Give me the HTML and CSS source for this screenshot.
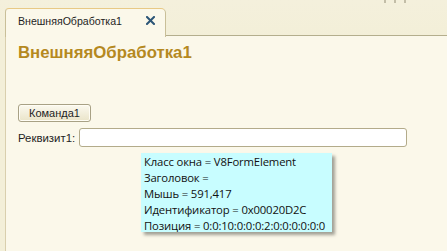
FILE: index.html
```html
<!DOCTYPE html>
<html>
<head>
<meta charset="utf-8">
<link rel="stylesheet" href="styles.css">
</head>
<body>
<div class="window">
  <div class="tabbar">
    <div class="tab">
      <span class="tab-title">ВнешняяОбработка1</span>
      <svg class="close" width="9" height="9" viewBox="0 0 9 9"><path d="M1 1 L8 8 M8 1 L1 8" stroke="#2c5677" stroke-width="2" stroke-linecap="square"/></svg>
    </div>
    <div class="tab-rest">
      <div class="dots"><i></i><i></i><i></i></div>
    </div>
  </div>
  <div class="content">
    <h1 class="title">ВнешняяОбработка1</h1>
    <button class="btn">Команда1</button>
    <div class="field">
      <label class="label">Реквизит1:</label>
      <div class="input"></div>
    </div>
    <div class="tooltip">
      <div>Класс окна = V8FormElement</div>
      <div>Заголовок =</div>
      <div>Мышь = 591,417</div>
      <div>Идентификатор = 0x00020D2C</div>
      <div>Позиция = 0:0:10:0:0:0:2:0:0:0:0:0:0</div>
    </div>
  </div>
</div>
</body>
</html>
```
FILE: styles.css
```css
html, body {
  margin: 0;
  padding: 0;
  width: 447px;
  height: 251px;
  overflow: hidden;
  background: #f3efd8;
}
.window {
  display: flex;
  flex-direction: column;
  height: 251px;
  font-family: "Liberation Sans", Arial, sans-serif;
  font-size: 11px;
  color: #1a1a1a;
}
.tabbar {
  display: flex;
  align-items: flex-end;
  height: 36px;
  padding-left: 5px;
  background: linear-gradient(#f4f0dc, #f3efd8);
}
.tab {
  position: relative;
  z-index: 1;
  width: 161px;
  height: 29px;
  margin-bottom: -1px;
  box-sizing: border-box;
  border: 1px solid #c9bf98;
  border-top-color: #e8c985;
  border-bottom: none;
  border-radius: 4px 5px 0 0;
  background: #fbf8ea;
  display: flex;
  align-items: center;
  padding: 0 0 5px 12px;
}
.tab-title {
  flex: 1;
  color: #1e1e1e;
  font-size: 10.6px;
}
.close {
  margin-right: 10px;
}
.tab-rest {
  flex: 1;
  align-self: stretch;
  border-bottom: 1px solid #b4ae8d;
  position: relative;
}
.dots {
  position: absolute;
  left: 218px;
  top: 0;
  display: flex;
  gap: 8px;
}
.dots i {
  display: block;
  width: 2px;
  height: 3px;
  background: #c3bea8;
}
.content {
  position: relative;
  flex: 1;
  margin-left: 5px;
  border-left: 1px solid #d9cfad;
  background: #fbf8ea;
  padding: 0 0 0 12px;
  display: flex;
  flex-direction: column;
  align-items: flex-start;
}
.title {
  margin: 7px 0 0 0;
  font-size: 16.8px;
  font-weight: bold;
  color: #b5891f;
  line-height: 20px;
}
.btn {
  margin-top: 41px;
  width: 73px;
  height: 18px;
  padding: 0;
  box-sizing: border-box;
  border: 1px solid #a8a185;
  border-radius: 3px;
  background: linear-gradient(#fbf9ef, #eae4c9);
  box-shadow: inset 0 0 0 1px #fffdf4;
  font-family: "Liberation Sans", Arial, sans-serif;
  font-size: 11px;
  color: #1e1e1e;
  line-height: 16px;
}
.field {
  display: flex;
  align-items: center;
  margin-top: 6px;
  gap: 1px;
}
.label {
  width: 60px;
  color: #1e1e1e;
  font-size: 11.4px;
}
.input {
  width: 328px;
  height: 19px;
  box-sizing: border-box;
  border: 1px solid #b3ab8a;
  border-radius: 3px;
  background: #ffffff;
}
.tooltip {
  position: absolute;
  left: 135px;
  top: 117px;
  width: 191px;
  height: 79px;
  box-sizing: border-box;
  padding: 1px 0 0 3px;
  background: #c8fdff;
  box-shadow: 3px 3px 3px rgba(90, 90, 80, 0.55);
  font-family: "Open Sans", "Noto Sans", sans-serif;
  font-size: 11.3px;
  line-height: 16px;
  color: #111;
  letter-spacing: -0.15px;
}
```
